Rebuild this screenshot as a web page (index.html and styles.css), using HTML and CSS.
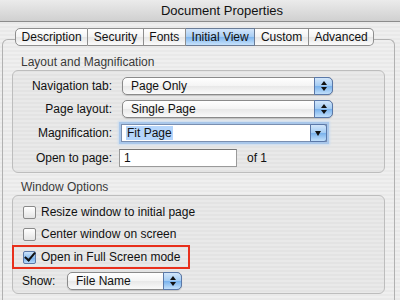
FILE: index.html
```html
<!DOCTYPE html>
<html lang="en">
<head>
  <meta charset="UTF-8" />
  <title>Document Properties</title>
  <link rel="stylesheet" href="styles.css">
</head>
<body>
  <div class="titlebar">Document Properties</div>

  <div class="tabs">
    <span class="tab">Description</span>
    <span class="tab">Security</span>
    <span class="tab">Fonts</span>
    <span class="tab active">Initial View</span>
    <span class="tab">Custom</span>
    <span class="tab">Advanced</span>
  </div>

  <div class="panel">
    <div class="group-title">Layout and Magnification</div>
    <div class="group layout">
      <label class="lbl">Navigation tab:</label>
      <div class="popup wide"><span>Page Only</span><i class="stepper"></i></div>

      <label class="lbl">Page layout:</label>
      <div class="popup wide"><span>Single Page</span><i class="stepper"></i></div>

      <label class="lbl">Magnification:</label>
      <div class="combo"><span class="sel">Fit Page</span><i class="drop"></i></div>

      <label class="lbl">Open to page:</label>
      <div class="page-row">
        <div class="field">1</div>
        <span>of 1</span>
      </div>
    </div>

    <div class="group-title second">Window Options</div>
    <div class="group options">
      <div class="check"><i class="box"></i>Resize window to initial page</div>
      <div class="check"><i class="box"></i>Center window on screen</div>
      <div class="check marked"><i class="box on"></i>Open in Full Screen mode</div>
      <div class="show-row">
        <span class="show-lbl">Show:</span>
        <div class="popup short"><span>File Name</span><i class="stepper"></i></div>
      </div>
    </div>
  </div>
</body>
</html>
```

FILE: styles.css
```css
body {
  margin: 0;
  width: 400px;
  height: 300px;
  overflow: hidden;
  font-family: "Liberation Sans", Arial, sans-serif;
  font-size: 12px;
  color: #111;
  background: repeating-linear-gradient(#efefef 0 2px, #e9e9e9 2px 4px);
}

.titlebar {
  height: 21px;
  line-height: 21px;
  padding-left: 44px;
  text-align: center;
  font-size: 13px;
  background: linear-gradient(#ebebeb, #d0d0d0);
  border-bottom: 1px solid #8c8c8c;
}

.tabs {
  display: flex;
  margin: 6px 0 0 15px;
  position: relative;
  z-index: 1;
}

.tab {
  flex: none;
  white-space: nowrap;
  height: 16px;
  line-height: 16px;
  padding: 0 5.6px;
  border: 1px solid #8e8e8e;
  border-left: none;
  background: linear-gradient(#ffffff 0%, #f3f3f3 50%, #e6e6e6 51%, #fbfbfb 100%);
}

.tab:first-child {
  border-left: 1px solid #8e8e8e;
  border-radius: 5px 0 0 5px;
}

.tab:last-child {
  border-radius: 0 5px 5px 0;
}

.tab.active {
  background: linear-gradient(#d4e6fa 0%, #a6cdf4 50%, #7fb6ee 51%, #c7e2fb 100%);
  border-color: #6a7c96;
}

.panel {
  margin: -7px 5px 0 2px;
  padding: 15px 9px 0 9px;
  border: 1px solid #b1b1b1;
  border-bottom: none;
  border-radius: 6px 6px 0 0;
  height: 300px;
}

.group-title {
  margin-left: 9px;
  height: 14px;
  line-height: 14px;
  color: #3a3a3a;
}

.group-title.second {
  margin-top: 7px;
}

.group {
  margin-top: 1px;
  border: 1px solid #bdbdbd;
  border-radius: 6px;
  background: rgba(0, 0, 0, 0.025);
}

.layout {
  display: grid;
  grid-template-columns: 99px 1fr;
  grid-template-rows: 23px 23px 25px 26px;
  column-gap: 10px;
  align-items: center;
  padding: 3px 0 1px 0;
}

.lbl {
  text-align: right;
}

.popup {
  position: relative;
  height: 16px;
  line-height: 16px;
  padding-left: 8px;
  border: 1px solid #8a8a8a;
  border-radius: 5px;
  background: linear-gradient(#ffffff 0%, #f4f4f4 50%, #e8e8e8 51%, #fafafa 100%);
  box-shadow: 0 1px 1px rgba(0, 0, 0, 0.15);
}

.popup.wide {
  width: 201px;
}

.popup.short {
  width: 105px;
}

.stepper {
  position: absolute;
  right: -1px;
  top: -1px;
  width: 17px;
  height: 16px;
  border: 1px solid #5a78a8;
  border-radius: 0 5px 5px 0;
  background: linear-gradient(#d2e6fb 0%, #a2cbf3 50%, #78b1ec 51%, #c2e0fb 100%);
}

.stepper::before,
.stepper::after {
  content: "";
  position: absolute;
  left: 6px;
  border-left: 3px solid transparent;
  border-right: 3px solid transparent;
}

.stepper::before {
  top: 3px;
  border-bottom: 4px solid #111;
}

.stepper::after {
  top: 9px;
  border-top: 4px solid #111;
}

.combo {
  position: relative;
  width: 200px;
  height: 16px;
  line-height: 16px;
  padding-left: 4px;
  margin-left: -1px;
  border: 1px solid #7a8fb0;
  background: #fff;
  box-shadow: 0 0 0 2px #a9c7ea, 0 0 2px 3px #c9dcf1;
}

.combo .sel {
  background: #b5d5fb;
  padding: 0 1px;
}

.drop {
  position: absolute;
  right: -1px;
  top: -1px;
  width: 15px;
  height: 16px;
  border: 1px solid #5a78a8;
  border-radius: 0 3px 3px 0;
  background: linear-gradient(#d2e6fb 0%, #a2cbf3 50%, #78b1ec 51%, #c2e0fb 100%);
}

.drop::after {
  content: "";
  position: absolute;
  left: 4px;
  top: 6px;
  border-left: 3.5px solid transparent;
  border-right: 3.5px solid transparent;
  border-top: 5px solid #111;
}

.page-row {
  display: flex;
  align-items: center;
  gap: 10px;
  margin-left: -3px;
}

.field {
  width: 112px;
  height: 16px;
  line-height: 16px;
  padding-left: 4px;
  border: 1px solid #9a9a9a;
  border-top-color: #777;
  background: #fff;
}

.options {
  padding: 5px 0 0 10px;
}

.check {
  display: flex;
  align-items: center;
  height: 22px;
  white-space: nowrap;
}

.check.marked {
  box-sizing: border-box;
  width: 178px;
  height: 24px;
  margin-left: -11px;
  padding-left: 9px;
  border: 2px solid #e8301c;
}

.box {
  width: 11px;
  height: 11px;
  margin-right: 5px;
  border: 1px solid #8a8a8a;
  border-radius: 2px;
  background: linear-gradient(#ffffff, #e4e4e4);
  flex: none;
}

.box.on {
  border-color: #5a78a8;
  background: linear-gradient(#cde3fa 0%, #8cbff0 50%, #6eaaea 51%, #b9dbfb 100%);
  position: relative;
}

.box.on::after {
  content: "";
  position: absolute;
  left: 3px;
  top: -2px;
  width: 4px;
  height: 9px;
  border-right: 2px solid #111;
  border-bottom: 2px solid #111;
  transform: rotate(40deg);
}

.show-row {
  display: flex;
  align-items: center;
  height: 24px;
  margin-left: -1px;
}

.show-lbl {
  width: 45px;
}
```
